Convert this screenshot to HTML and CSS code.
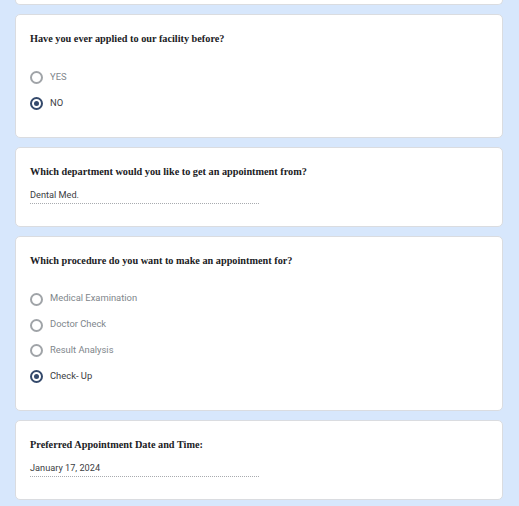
FILE: index.html
```html
<!DOCTYPE html>
<html lang="en">
<head>
<meta charset="utf-8">
<title>Appointment Form</title>
<link rel="stylesheet" href="styles.css">
</head>
<body>
<div class="form">
  <div class="card card-cut"></div>

  <div class="card">
    <div class="question">Have you ever applied to our facility before?</div>
    <div class="options">
      <div class="option"><span class="radio"></span><span class="label">YES</span></div>
      <div class="option selected"><span class="radio"></span><span class="label">NO</span></div>
    </div>
  </div>

  <div class="card card-input">
    <div class="question q-short">Which department would you like to get an appointment from?</div>
    <div class="answer">Dental Med.</div>
  </div>

  <div class="card">
    <div class="question">Which procedure do you want to make an appointment for?</div>
    <div class="options">
      <div class="option"><span class="radio"></span><span class="label">Medical Examination</span></div>
      <div class="option"><span class="radio"></span><span class="label">Doctor Check</span></div>
      <div class="option"><span class="radio"></span><span class="label">Result Analysis</span></div>
      <div class="option selected"><span class="radio"></span><span class="label">Check- Up</span></div>
    </div>
  </div>

  <div class="card card-input">
    <div class="question q-short">Preferred Appointment Date and Time:</div>
    <div class="answer">January 17, 2024</div>
  </div>
</div>
</body>
</html>
```

FILE: styles.css
```css
html, body {
  margin: 0;
  padding: 0;
  background: #d7e7fc;
}
body {
  width: 519px;
  height: 506px;
  overflow: hidden;
}
.form {
  display: flex;
  flex-direction: column;
  gap: 9px;
  padding: 0 16px 0 15px;
}
.card {
  background: #ffffff;
  border: 1px solid #dadce0;
  border-radius: 5px;
  padding: 16px 14px 20px 14px;
}
.card-cut {
  height: 4px;
  padding: 0;
  border-top: none;
  border-radius: 0 0 5px 5px;
}
.card-input {
  padding-bottom: 22px;
}
.question {
  font-family: "Liberation Serif", "Times New Roman", serif;
  font-weight: bold;
  font-size: 10.25px;
  line-height: 16px;
  color: #202124;
  margin-bottom: 18px;
}
.q-short {
  margin-bottom: 7px;
}
.options {
  display: flex;
  flex-direction: column;
}
.option {
  height: 25.75px;
  display: flex;
  align-items: center;
  gap: 7px;
}
.radio {
  box-sizing: border-box;
  width: 13px;
  height: 13px;
  border: 2px solid #a0a4a8;
  border-radius: 50%;
  flex: none;
  display: flex;
  align-items: center;
  justify-content: center;
}
.selected .radio {
  border-color: #34496b;
}
.selected .radio::after {
  content: "";
  width: 5px;
  height: 5px;
  border-radius: 50%;
  background: #34496b;
}
.label {
  font-family: Roboto, "Liberation Sans", sans-serif;
  font-size: 9.4px;
  color: #80868b;
  line-height: 14px;
  margin-top: -2px;
}
.selected .label {
  color: #3c4043;
}
.answer {
  width: 229px;
  font-family: Roboto, "Liberation Sans", sans-serif;
  font-size: 9.2px;
  line-height: 16px;
  color: #3c4043;
  border-bottom: 1px dotted #a8abaf;
}
```
